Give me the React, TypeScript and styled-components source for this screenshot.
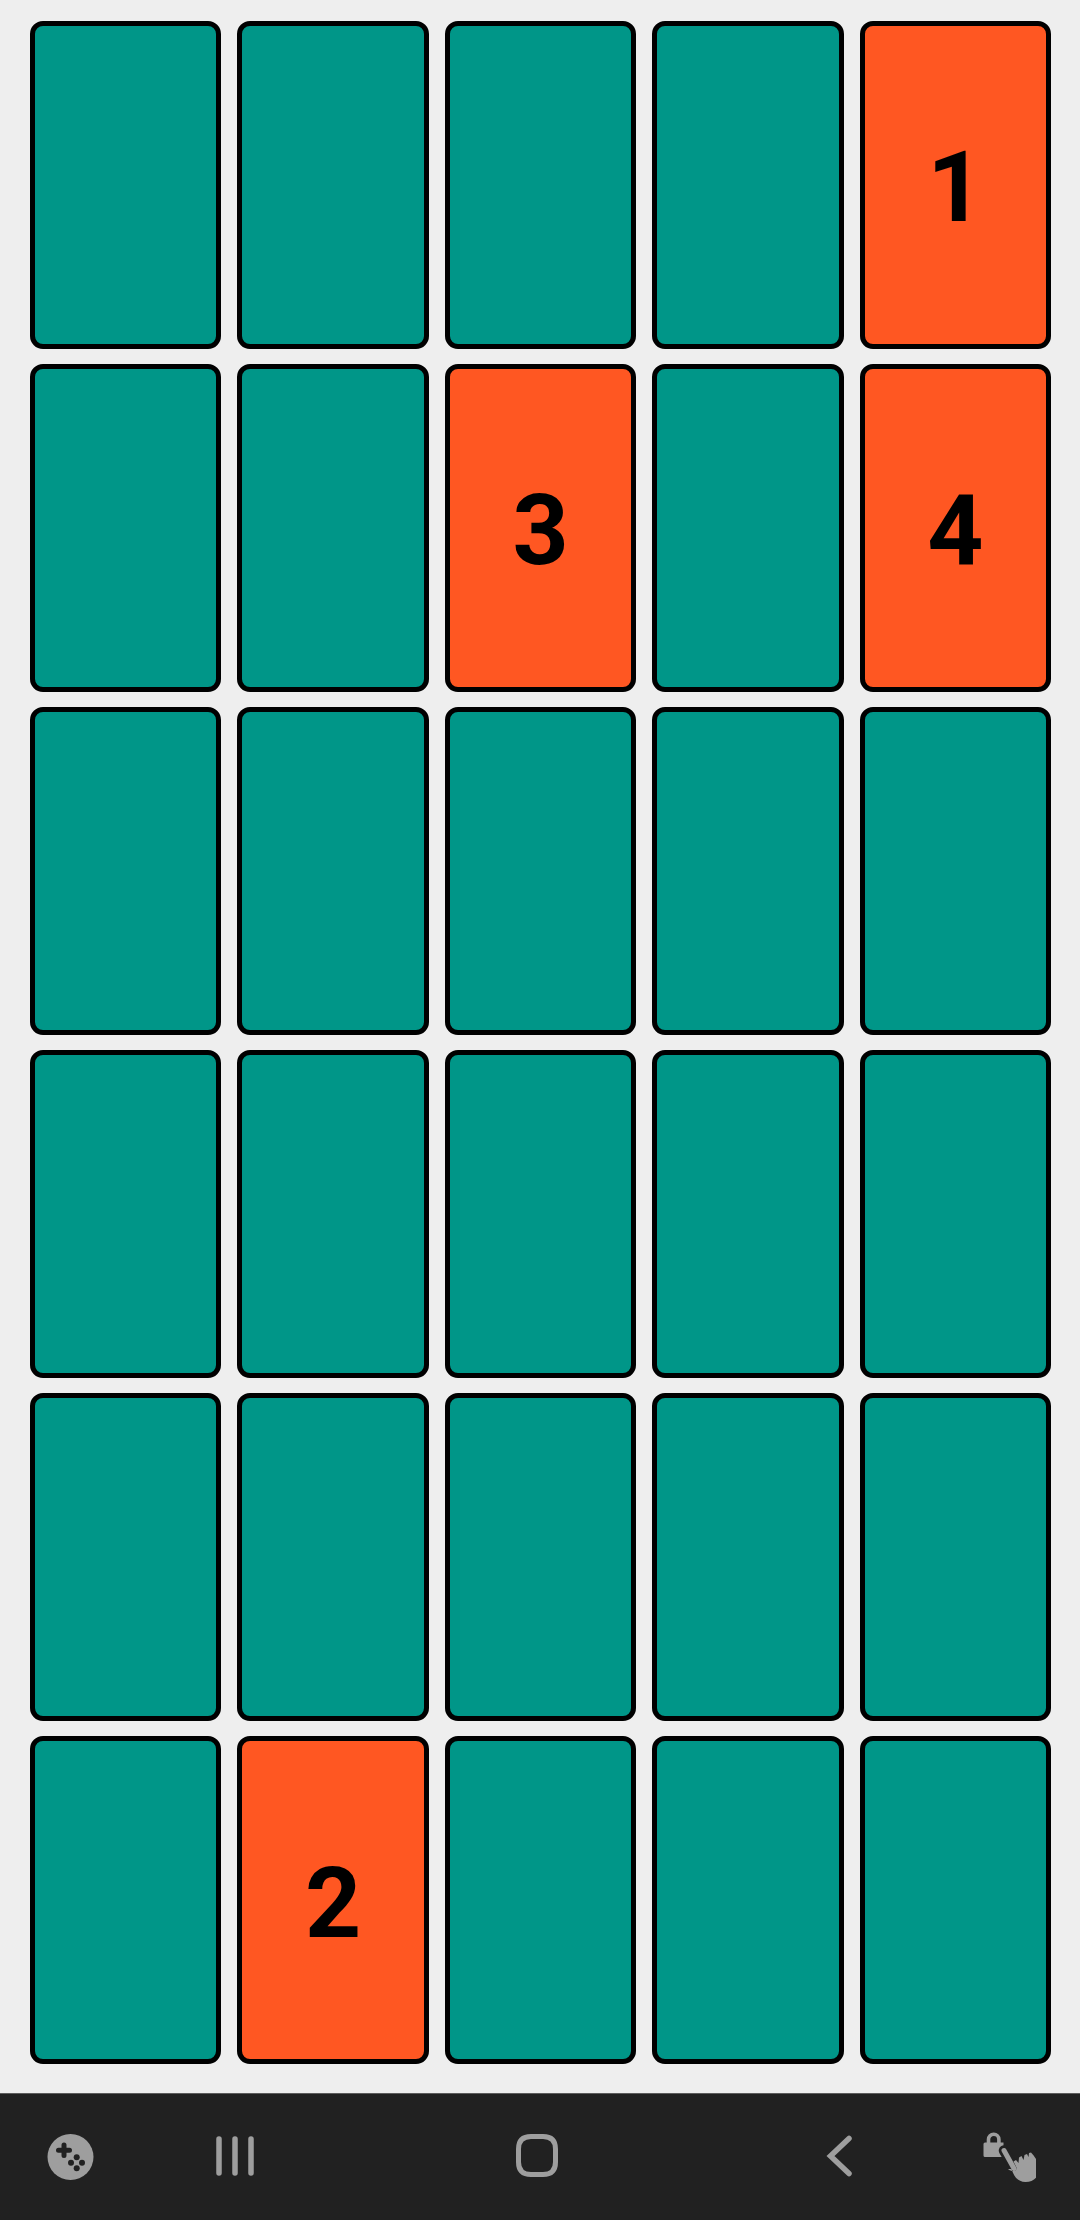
import styled, { createGlobalStyle } from "styled-components";

const cells = [
  0, 0, 0, 0, 1,
  0, 0, 3, 0, 4,
  0, 0, 0, 0, 0,
  0, 0, 0, 0, 0,
  0, 0, 0, 0, 0,
  0, 2, 0, 0, 0,
];

const App = () => {
  return (
    <Screen>
      <GlobalStyle />
      <Board>
        {cells.map((value, index) => (
          <Card key={index} $revealed={value > 0}>
            {value > 0 ? value : null}
          </Card>
        ))}
      </Board>
      <NavBar>
        <NavSlot>
          <svg width="47" height="46" viewBox="0 0 47 46">
            <circle cx="23.5" cy="23" r="23" fill="#9e9e9e" />
            <path d="M17 11v10.500M11.500 16.300h11" stroke="#212121" strokeWidth="5" strokeLinecap="round" />
            <circle cx="29.700" cy="23.300" r="3" fill="#212121" />
            <circle cx="24" cy="28.700" r="3" fill="#212121" />
            <circle cx="35" cy="28.700" r="3" fill="#212121" />
            <circle cx="29.700" cy="34.300" r="3" fill="#212121" />
          </svg>
        </NavSlot>
        <NavSlot>
          <svg width="38" height="42" viewBox="0 0 38 42">
            <path d="M3 3v34M19 3v34M35 3v34" stroke="#9e9e9e" strokeWidth="5.500" strokeLinecap="round" fill="none" />
          </svg>
        </NavSlot>
        <NavSlot>
          <svg width="42" height="46" viewBox="0 0 42 46">
            <path
              d="M15 2.500h12c8.500 0 12.500 4 12.500 12.500v13c0 8.500-4 12.500-12.500 12.500H15c-8.500 0-12.500-4-12.500-12.500V15C2.500 6.500 6.500 2.500 15 2.500z"
              fill="none"
              stroke="#9e9e9e"
              strokeWidth="5"
            />
          </svg>
        </NavSlot>
        <NavSlot>
          <svg width="26" height="44" viewBox="0 0 26 44">
            <path d="M23 3.500L4.500 21 23 38.500" fill="none" stroke="#9e9e9e" strokeWidth="5.500" strokeLinecap="round" />
          </svg>
        </NavSlot>
        <NavSlot>
          <svg width="53" height="51" viewBox="0 0 53 51">
            <path d="M5.500 11V7.500a5.200 5.200 0 0 1 10.400 0V11" fill="none" stroke="#9e9e9e" strokeWidth="3.600" />
            <path d="M0.500 12a1.500 1.500 0 0 1 1.500-1.500h18.500V25H2a1.500 1.500 0 0 1-1.500-1.500z" fill="#9e9e9e" />
            <path d="M21 18.500l7 12" stroke="#212121" strokeWidth="10.500" strokeLinecap="round" />
            <path d="M21 18.500l10 18" stroke="#9e9e9e" strokeWidth="5" strokeLinecap="round" />
            <path
              d="M25 37c1.500 1.500 3.500 2 5.500 2 2 0 3.500-1.500 3-3.500l-3-6 2.500-1.500 2.500 3 .5-5.500 2.500-1.500 2 4 1-5 2.500-1 1.500 3 .5-4 2-.5c4 4 8 10 8 16.500 0 8-5.500 13-13.500 13-7.500 0-11.500-5-14-13z"
              fill="#9e9e9e"
            />
          </svg>
        </NavSlot>
      </NavBar>
    </Screen>
  );
};

const GlobalStyle = createGlobalStyle`
  html,
  body {
    margin: 0;
    padding: 0;
    background: #eeeeee;
  }
`;

const Screen = styled.div`
  width: 1080px;
  height: 2220px;
  display: flex;
  flex-direction: column;
  background: #eeeeee;
  font-family: Roboto, "Liberation Sans", sans-serif;
`;

const Board = styled.div`
  flex: 1;
  min-height: 0;
  display: grid;
  grid-template-columns: repeat(5, 1fr);
  grid-template-rows: repeat(6, 1fr);
  gap: 15.5px 16px;
  padding: 21px 29px 29px 30px;
`;

const Card = styled.div<{ $revealed?: boolean }>`
  display: flex;
  align-items: center;
  justify-content: center;
  padding-top: 7px;
  border: 5px solid #000;
  border-radius: 13px;
  background: ${({ $revealed }) => ($revealed ? "#ff5722" : "#009688")};
  color: #000;
  font-size: 98px;
  font-weight: 700;
  line-height: 1;
`;

const NavBar = styled.div`
  flex: none;
  box-sizing: border-box;
  height: 127px;
  display: grid;
  grid-template-columns: 131px 198px 405px 200px 141px;
  padding-left: 5px;
  border-top: 1px solid #5c5c5c;
  background: #212121;
`;

const NavSlot = styled.div`
  display: flex;
  align-items: center;
  justify-content: center;
`;

export default App;
